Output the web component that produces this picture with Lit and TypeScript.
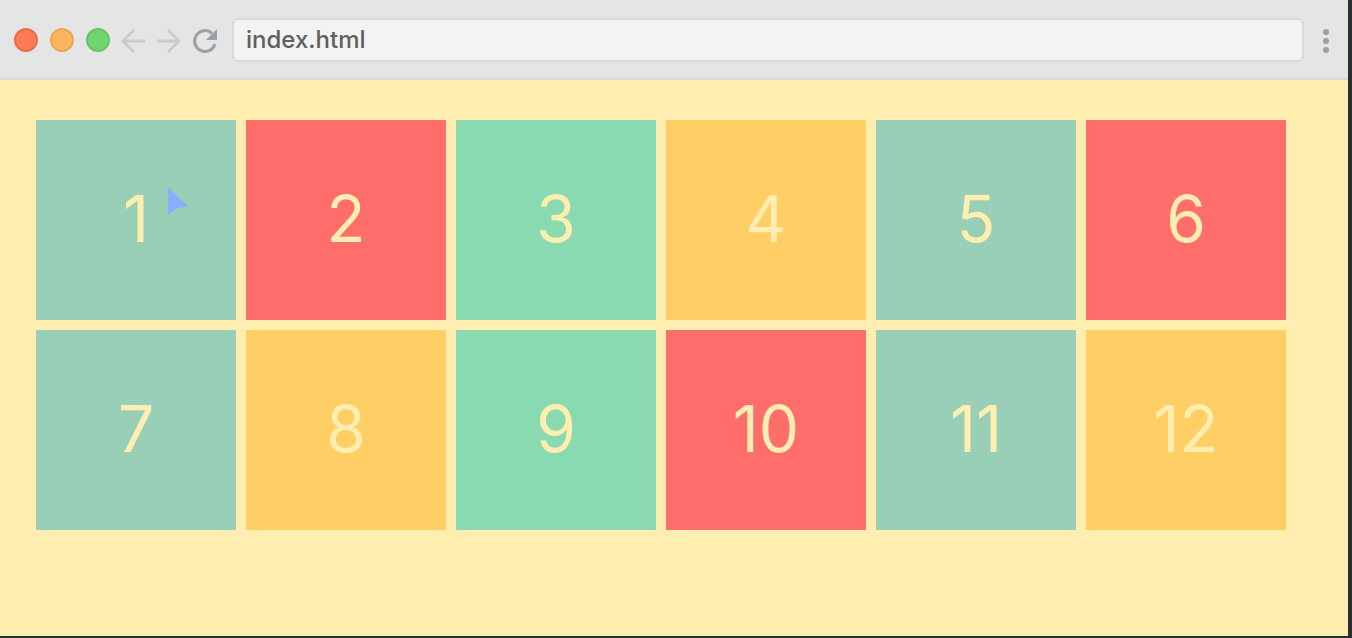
import { LitElement, html, css } from "lit";
import { customElement } from "lit/decorators.js";
import { classMap } from "lit/directives/class-map.js";

type Tone = "sage" | "coral" | "mint" | "amber";

@customElement("browser-bar")
class BrowserBar extends LitElement {
  static styles = css`
    :host {
      display: flex;
      align-items: center;
      box-sizing: border-box;
      height: 80px;
      padding: 2px 18px 0 14px;
      background: #e5e5e5;
      border-bottom: 2px solid #dadada;
    }
    button {
      display: block;
      flex: none;
      box-sizing: border-box;
      padding: 0;
      border: 0;
      background: none;
    }
    svg {
      display: block;
    }
    .lights {
      display: flex;
      gap: 12px;
    }
    .light {
      width: 24px;
      height: 24px;
      border-radius: 50%;
      border: 2px solid;
    }
    .close {
      background: #fc7b56;
      border-color: #e56f4f;
    }
    .minimise {
      background: #fcb45c;
      border-color: #e8a859;
    }
    .zoom {
      background: #70d56f;
      border-color: #69c368;
    }
    .nav {
      display: flex;
      gap: 12px;
      margin: 2px 15px 0 11px;
    }
    .address {
      flex: 1;
      min-width: 0;
      box-sizing: border-box;
      height: 44px;
      margin: 0 18px 0 0;
      padding: 0 12px 2px;
      border: 2px solid #dadada;
      border-radius: 6px;
      outline: none;
      background: #f3f3f3;
      color: #606060;
      font: 500 24px/38px Inter, sans-serif;
    }
    .menu {
      margin-top: 2px;
    }
  `;

  render() {
    return html`
      <div class="lights">
        <button class="light close" aria-label="Close"></button>
        <button class="light minimise" aria-label="Minimise"></button>
        <button class="light zoom" aria-label="Zoom"></button>
      </div>
      <div class="nav">
        <button aria-label="Back">
          <svg width="24" height="24" viewBox="0 0 24 24" fill="none" stroke="#c7ccd0" stroke-width="2.8">
            <path d="M24 12H2M13 1L2 12l11 11" />
          </svg>
        </button>
        <button aria-label="Forward">
          <svg width="24" height="24" viewBox="0 0 24 24" fill="none" stroke="#c7ccd0" stroke-width="2.8">
            <path d="M0 12h22M11 1l11 11-11 11" />
          </svg>
        </button>
        <button aria-label="Reload">
          <svg width="24" height="24" viewBox="0 0 24 24">
            <path d="M22 15A10.4 10.4 0 1 1 19 4.3" fill="none" stroke="#98a1a8" stroke-width="3" />
            <path d="M24 0v11H13z" fill="#98a1a8" />
          </svg>
        </button>
      </div>
      <input class="address" type="text" aria-label="Address" value="index.html" />
      <button class="menu" aria-label="Menu">
        <svg width="8" height="24" viewBox="0 0 8 24" fill="#98a1a8">
          <circle cx="4" cy="3" r="3" />
          <circle cx="4" cy="12" r="3" />
          <circle cx="4" cy="21" r="3" />
        </svg>
      </button>
    `;
  }
}

@customElement("app-root")
class AppRoot extends LitElement {
  static styles = css`
    :host {
      display: flex;
      flex-direction: column;
      box-sizing: border-box;
      min-height: 100vh;
      border: solid #263035;
      border-width: 0 4px 2px 0;
      background: #ffeeaf;
    }
    .page {
      position: relative;
      padding: 40px 36px;
    }
    .grid {
      display: grid;
      grid-template-columns: repeat(auto-fill, 200px);
      grid-auto-rows: 200px;
      gap: 10px;
    }
    .tile {
      display: flex;
      align-items: center;
      justify-content: center;
      box-sizing: border-box;
      padding-bottom: 2px;
      color: #ffeeaf;
      font: 400 64px/76px Inter, sans-serif;
    }
    .sage {
      background: #98cfb6;
    }
    .coral {
      background: #ff6e6a;
    }
    .mint {
      background: #89d9b1;
    }
    .amber {
      background: #ffce65;
    }
    .cursor {
      position: absolute;
      left: 168px;
      top: 107px;
      display: block;
    }
  `;

  private tones: Tone[] = [
    "sage", "coral", "mint", "amber", "sage", "coral",
    "sage", "amber", "mint", "coral", "sage", "amber",
  ];

  render() {
    return html`
      <browser-bar></browser-bar>
      <main class="page">
        <div class="grid">
          ${this.tones.map(
            (tone, i) => html`<div class=${classMap({ tile: true, [tone]: true })}>${i + 1}</div>`
          )}
        </div>
        <svg class="cursor" width="20" height="28" viewBox="0 0 20 28" aria-hidden="true">
          <path d="M0 0L20 19.500L9 21L0 28z" fill="#8aaeff" />
        </svg>
      </main>
    `;
  }
}
